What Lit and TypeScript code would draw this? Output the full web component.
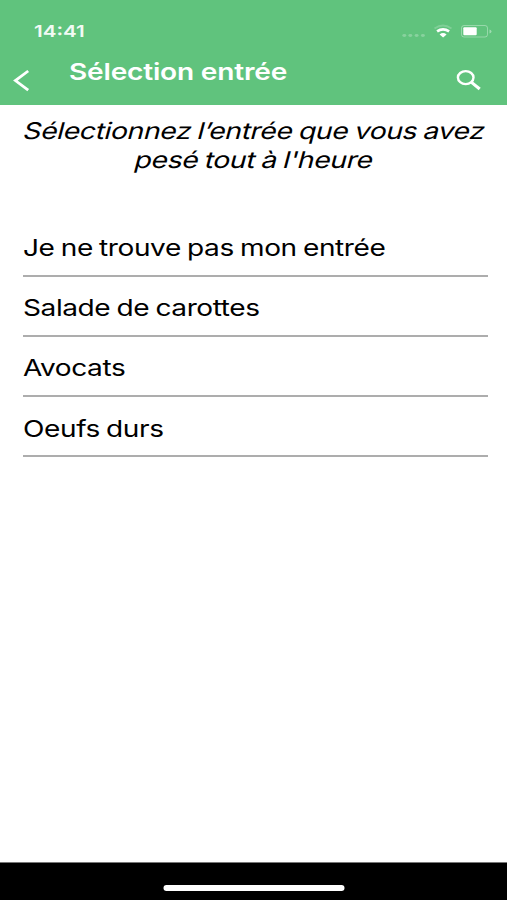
import { LitElement, html, css } from "lit";
import { customElement } from "lit/decorators.js";

const STARTERS = ["Je ne trouve pas mon entrée", "Salade de carottes", "Avocats", "Oeufs durs"];

@customElement("app-root")
class AppRoot extends LitElement {
  static styles = css`
    :host {
      display: flex;
      flex-direction: column;
      width: 507px;
      height: 900px;
      overflow: hidden;
      background: #fff;
      color: #000;
      font-family: Inter, "Liberation Sans", sans-serif;
    }
    .wide {
      display: inline-block;
      white-space: nowrap;
      transform: scaleX(1.22);
      transform-origin: 0 50%;
    }
    header {
      height: 105px;
      flex: none;
      background: #60c37d;
      color: #fff;
    }
    .status {
      display: flex;
      justify-content: space-between;
      height: 50px;
      box-sizing: border-box;
      padding: 21px 15px 0 34px;
    }
    .time {
      font-size: 16.5px;
      line-height: 20px;
      font-weight: 600;
      opacity: 0.92;
      transform: scaleX(1.25);
    }
    .bar {
      display: flex;
      height: 55px;
    }
    .back {
      width: 69px;
    }
    .title {
      flex: 1;
      font-size: 23px;
      letter-spacing: -0.15px;
      line-height: 28px;
      padding-top: 7.5px;
      font-weight: 600;
    }
    .search {
      padding: 18px 25px 0 0;
    }
    svg {
      display: block;
    }
    .intro {
      height: 111.5px;
      padding-top: 12px;
      box-sizing: border-box;
      text-align: center;
      font-size: 23px;
      letter-spacing: -0.35px;
      word-spacing: -1px;
      line-height: 29px;
    }
    .intro .wide {
      transform: translateX(0.7px) scaleX(1.235) skewX(-12deg);
      transform-origin: 50% 50%;
    }
    ul {
      flex: 1;
      list-style: none;
      margin: 0;
      padding: 0 19px 0 23px;
    }
    li {
      height: 60.2px;
      box-sizing: border-box;
      padding-top: 17.5px;
      border-bottom: 2px solid #adadad;
      font-size: 23px;
      letter-spacing: -0.35px;
      word-spacing: -1px;
      line-height: 28px;
    }
    li .wide {
      margin-left: -0.3px;
    }
    footer {
      height: 38px;
      box-sizing: border-box;
      flex: none;
      background: #000;
      border-top: 1px solid #777;
      padding-top: 22px;
    }
    .handle {
      width: 181px;
      height: 6px;
      border-radius: 3px;
      background: #fff;
      margin: 0 auto;
      transform: translateX(0.5px);
    }
  `;

  render() {
    return html`
      <header>
        <div class="status">
          <span class="wide time">14:41</span>
          <svg width="92" height="20" viewBox="400 21 92 20" fill="#fff">
            <g opacity="0.25">
              <ellipse cx="404.3" cy="35.5" rx="2" ry="1.4" />
              <ellipse cx="410.3" cy="35.5" rx="2" ry="1.4" />
              <ellipse cx="416.6" cy="35.5" rx="2" ry="1.4" />
              <ellipse cx="422.9" cy="35.5" rx="2" ry="1.4" />
            </g>
            <path d="M434.5 28.5Q443 22.5 451.5 28.5" fill="none" stroke="#fff" stroke-width="1.8" opacity="0.2" />
            <path d="M437.1 31.4Q443 27.2 449.1 31.4" fill="none" stroke="#fff" stroke-width="2.6" />
            <path d="M439.6 34.4Q443 31.6 446.6 34.4L443.1 37.4Z" />
            <rect x="461.5" y="25.5" width="26" height="11.5" rx="2.5" fill="none" stroke="#fff" opacity="0.35" />
            <rect x="463.3" y="27.3" width="13.4" height="8" rx="1" />
            <path d="M489.5 29.5Q491.5 30 491.5 31.5Q491.5 33 489.5 33.5Z" opacity="0.4" />
          </svg>
        </div>
        <div class="bar">
          <svg class="back" width="69" height="55" viewBox="0 50 69 55">
            <path d="M28.2 71L15.4 80.6L28.2 90.2" fill="none" stroke="#fff" stroke-width="2.8" />
          </svg>
          <div class="title"><span class="wide">Sélection entrée</span></div>
          <div class="search">
            <svg width="26" height="24" viewBox="456 68 26 24" fill="none" stroke="#fff">
              <ellipse cx="465.7" cy="77.6" rx="7.8" ry="6.5" stroke-width="2.4" />
              <path d="M471.2 82.1L479.7 89" stroke-width="3.1" />
            </svg>
          </div>
        </div>
      </header>
      <div class="intro">
        <span class="wide">Sélectionnez l’entrée que vous avez</span><br />
        <span class="wide">pesé tout à l'heure</span>
      </div>
      <ul>
        ${STARTERS.map((name) => html`<li><span class="wide">${name}</span></li>`)}
      </ul>
      <footer><div class="handle"></div></footer>
    `;
  }
}
